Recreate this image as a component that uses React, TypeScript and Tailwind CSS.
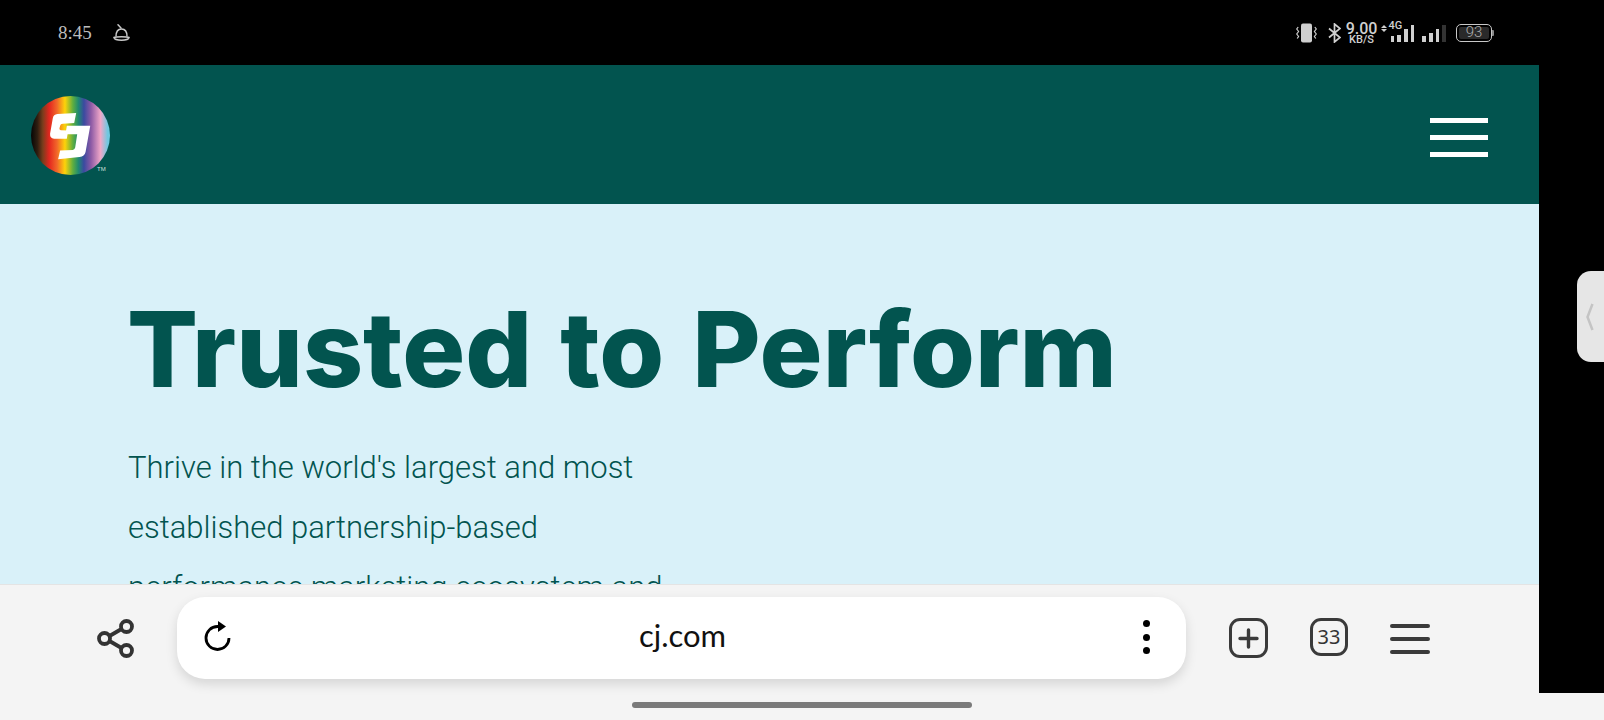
import React from "react";

function Logo() {
  return (
    <div className="relative w-[79px] h-[79px] mt-[1px]">
      <svg width="79" height="79" viewBox="17 17 236 236">
        <defs>
          <linearGradient id="pride" x1="0" x2="1" y1="0" y2="0">
            <stop offset="0" stopColor="#060605" />
            <stop offset="0.08" stopColor="#2e1d10" />
            <stop offset="0.15" stopColor="#7a3d1c" />
            <stop offset="0.23" stopColor="#e3261f" />
            <stop offset="0.33" stopColor="#f2682a" />
            <stop offset="0.43" stopColor="#fdd309" />
            <stop offset="0.53" stopColor="#5fae3f" />
            <stop offset="0.6" stopColor="#1f8a70" />
            <stop offset="0.67" stopColor="#3a4aa0" />
            <stop offset="0.76" stopColor="#8d5aa5" />
            <stop offset="0.88" stopColor="#f0a8c8" />
            <stop offset="0.97" stopColor="#6fc8e0" />
          </linearGradient>
        </defs>
        <circle cx="135" cy="135" r="118" fill="url(#pride)" />
        <path d="M152 68 L96 71 Q84 72 82 84 L74 130 Q73 144 86 145 L124 145 L128 120 L106 119 Q101 118 102 113 L104 106 Q105 100 112 100 L146 98 Z" fill="#fff" />
        <path d="M124 106 L194 106 L180 184 Q177 198 162 199 L98 206 L104 180 L142 178 Q148 177 149 171 L155 131 L120 131 Z" fill="#fff" />
      </svg>
      <span className="absolute left-[66px] top-[70px] text-[6px] leading-[7px] text-[#cfe0de] font-['Liberation_Sans',sans-serif]">TM</span>
    </div>
  );
}

function StatusBar() {
  return (
    <div className="h-[65px] bg-black flex items-center justify-between pl-[58px] pr-[110px] text-[#c8c8c8]">
      <div className="flex items-center gap-[21px]">
        <span className="text-[19px] leading-[24px] text-[#bdbdbd] font-['Liberation_Serif',serif]">8:45</span>
        <svg width="17" height="18" viewBox="0 0 17 18" fill="none" stroke="#c8c8c8" strokeWidth="1.5">
          <path d="M5 0.8 L8 4" strokeLinecap="round" />
          <path d="M3 12.5 C3 7.5 5.5 5 8.5 5 C11.5 5 14 7.5 14 12.5" />
          <path d="M1 13.5 C3 12.5 14 12.5 16 13.5 C15.5 15.5 12.5 16.2 8.5 16.2 C4.5 16.2 1.5 15.5 1 13.5 Z" />
        </svg>
      </div>
      <div className="flex items-center">
        <svg width="21" height="20" viewBox="0 0 21 20" fill="none">
          <rect x="5" y="0.5" width="11" height="19" rx="2" fill="#cfcfcf" />
          <path d="M2.2 4 L0.7 6 L2.6 8.5 L0.7 11 L2.6 13.5 L1.2 15.5 M18.8 4 L20.3 6 L18.4 8.5 L20.3 11 L18.4 13.5 L19.8 15.5" stroke="#cfcfcf" strokeWidth="1.2" />
        </svg>
        <svg className="ml-[11px]" width="13" height="20" viewBox="0 0 13 20" fill="none" stroke="#d0d0d0" strokeWidth="1.7">
          <path d="M1 5.5 L12 14.5 L6.5 19 V1 L12 5.5 L1 14.5" />
        </svg>
        <div className="ml-[6px] w-[30px] flex flex-col items-center font-['Roboto',sans-serif] text-[#d0d0d0]">
          <span className="text-[16px] leading-[13px] font-medium">9.00</span>
          <span className="text-[11px] leading-[9px] font-medium">KB/S</span>
        </div>
        <div className="ml-[4px] flex flex-col items-center gap-[1px] mb-[8px]">
          <span className="w-0 h-0 border-x-[3px] border-x-transparent border-b-[3px] border-b-[#d0d0d0]" />
          <span className="w-0 h-0 border-x-[3px] border-x-transparent border-t-[3px] border-t-[#d0d0d0]" />
        </div>
        <div className="relative ml-[4px] flex items-end gap-[3px] h-[18px] mt-[1px]">
          <span className="absolute left-[-2px] top-[-3px] text-[11px] leading-[10px] font-medium text-[#d0d0d0] font-['Roboto',sans-serif]">4G</span>
          <span className="w-[3.7px] h-[6px] bg-[#d0d0d0]" />
          <span className="w-[3.7px] h-[7px] bg-[#d0d0d0]" />
          <span className="w-[3.7px] h-[13px] bg-[#d0d0d0]" />
          <span className="w-[3.7px] h-[17px] bg-[#d0d0d0]" />
        </div>
        <div className="ml-[8px] flex items-end gap-[3px] h-[18px] mt-[1px]">
          <span className="w-[3.7px] h-[6px] bg-[#d0d0d0]" />
          <span className="w-[3.7px] h-[9px] bg-[#d0d0d0]" />
          <span className="w-[3.7px] h-[13px] bg-[#d0d0d0]" />
          <span className="w-[3.7px] h-[17px] bg-[#333333]" />
        </div>
        <div className="ml-[10px] flex items-center">
          <div className="w-[36px] h-[18px] rounded-[5px] border border-[#c8c8c8] p-[2px]">
            <div className="w-full h-full rounded-[2px] bg-[#2a2a2a] flex items-center justify-center text-[15px] leading-none text-[#b0b0b0] font-['Roboto',sans-serif] font-light">93</div>
          </div>
          <span className="w-[2px] h-[6px] bg-[#8a8a8a] rounded-r-[1px]" />
        </div>
      </div>
    </div>
  );
}

function Share() {
  return (
    <svg width="37" height="39" viewBox="0 0 37 39" fill="none" stroke="#333333" strokeWidth="3.8">
      <circle cx="7.5" cy="19.5" r="5.5" />
      <circle cx="29.5" cy="7.5" r="5.5" />
      <circle cx="29.5" cy="31.5" r="5.5" />
      <path d="M12.5 17 L24.5 10 M12.5 22 L24.5 29" />
    </svg>
  );
}

function Reload() {
  return (
    <svg className="mb-[4px]" width="28" height="30" viewBox="0 0 28 30" fill="none">
      <path d="M25 17 A11.5 11.5 0 1 1 13.5 5.5 L16 5.5" stroke="#000" strokeWidth="2.8" />
      <path d="M14 0 L22 5.5 L14 11 Z" fill="#000" />
    </svg>
  );
}

function Toolbar() {
  return (
    <div className="h-[109px] bg-[#f4f4f4] border-t border-[#e4e4e4] flex items-start pl-[97px] pt-[12px]">
      <div className="mt-[22px] w-[37px]"><Share /></div>
      <div className="ml-[43px] w-[1009px] h-[82px] bg-white rounded-[28px] shadow-[0_5px_12px_rgba(0,0,0,0.13)] flex items-center pl-[27px] pr-[36px]">
        <Reload />
        <span className="flex-1 mb-[6px] pr-[10px] text-center text-[31px] leading-[36px] text-[#111111] font-['Lato',sans-serif]">cj.com</span>
        <div className="mb-[2px] flex flex-col gap-[6.5px]">
          <span className="w-[7px] h-[7px] rounded-full bg-black" />
          <span className="w-[7px] h-[7px] rounded-full bg-black" />
          <span className="w-[7px] h-[7px] rounded-full bg-black" />
        </div>
      </div>
      <div className="ml-[43px] mt-[21px] w-[39px] h-[40px] rounded-[11px] border-[3.6px] border-[#3a3a3a] flex items-center justify-center">
        <svg width="21" height="21" viewBox="0 0 21 21" stroke="#3a3a3a" strokeWidth="3.4" strokeLinecap="round">
          <path d="M2 10.5 H19 M10.5 2 V19" />
        </svg>
      </div>
      <div className="ml-[42px] mt-[21px] w-[38px] h-[38px] rounded-[11px] border-[3.6px] border-[#3a3a3a] flex items-center justify-center text-[20px] leading-none text-[#333333] font-['Noto_Sans',sans-serif]">33</div>
      <div className="ml-[42px] mt-[27px] w-[40px] flex flex-col gap-[9px]">
        <span className="h-[4px] rounded-full bg-[#3a3a3a]" />
        <span className="h-[4px] rounded-full bg-[#3a3a3a]" />
        <span className="h-[4px] rounded-full bg-[#3a3a3a]" />
      </div>
    </div>
  );
}

export default function App() {
  return (
    <div className="relative w-[1604px] h-[720px] bg-black overflow-hidden">
      <StatusBar />
      <div className="w-[1539px] h-[628px] flex flex-col">
        <header className="h-[139px] shrink-0 bg-[#02544f] flex items-center justify-between pl-[31px] pr-[51px]">
          <Logo />
          <div className="mt-[6px] flex flex-col gap-[12px] w-[58px]">
            <span className="h-[5px] bg-white" />
            <span className="h-[5px] bg-white" />
            <span className="h-[5px] bg-white" />
          </div>
        </header>
        <main className="flex-1 min-h-0 overflow-hidden bg-[#d9f1f9] pl-[127px] pt-[80px] text-[#02544f] font-['Inter',sans-serif]">
          <h1 className="text-[105px] leading-[130px] font-extrabold [word-spacing:5px] whitespace-nowrap">Trusted to Perform</h1>
          <p className="mt-[24px] ml-px w-[560px] text-[31px] leading-[60px] font-light font-['Roboto',sans-serif]">
            Thrive in the world's largest and most established partnership-based performance marketing ecosystem and
          </p>
        </main>
        <Toolbar />
      </div>
      <div className="h-[27px] bg-[#f4f4f4] flex justify-center pt-[9px]">
        <span className="w-[340px] h-[6px] rounded-full bg-[#7a7a7a]" />
      </div>
      <div className="absolute right-0 top-[271px] w-[27px] h-[91px] rounded-l-[14px] bg-[#e6e6e6] flex items-center pl-[9px]">
        <svg width="8" height="28" viewBox="0 0 8 28" fill="none" stroke="#c4c4c4" strokeWidth="2.5">
          <path d="M6.5 1 L1.5 14 L6.5 27" />
        </svg>
      </div>
    </div>
  );
}
